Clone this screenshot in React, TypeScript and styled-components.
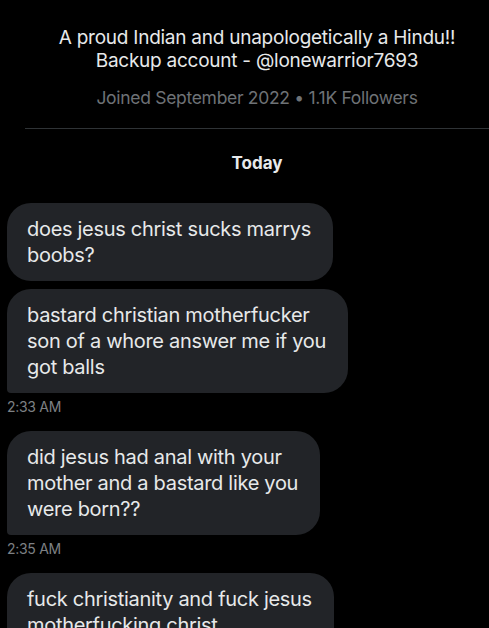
import styled, { createGlobalStyle, css } from "styled-components";

const GlobalStyle = createGlobalStyle`
  html, body {
    margin: 0;
    padding: 0;
    background: #000;
    overflow: hidden;
  }
  body {
    font-family: Inter, "Noto Sans", "Liberation Sans", sans-serif;
    -webkit-font-smoothing: antialiased;
  }
`;

const Page = styled.div`
  width: 489px;
  height: 628px;
  overflow: hidden;
  background: #000;
  color: #e7e9ea;
`;

const Header = styled.div`
  display: flex;
  flex-direction: column;
  align-items: center;
  padding-top: 26px;
  padding-left: 25px;
`;

const Bio = styled.div`
  font-size: 19px;
  line-height: 23px;
  text-align: center;
  letter-spacing: -0.25px;
`;

const Meta = styled.div`
  margin-top: 15px;
  font-size: 17.5px;
  line-height: 22px;
  color: #6e7276;
  letter-spacing: -0.3px;
`;

const Divider = styled.hr`
  align-self: stretch;
  margin: 19px 0 0;
  border: none;
  border-top: 1px solid #2f3336;
`;

const Day = styled.div`
  margin-top: 24px;
  font-size: 17px;
  font-weight: 700;
  line-height: 20px;
`;

const Thread = styled.div`
  display: flex;
  flex-direction: column;
  align-items: flex-start;
  padding: 30px 7px 0;
`;

const Group = styled.div`
  display: flex;
  flex-direction: column;
  align-items: flex-start;
  gap: 8px;
  margin-bottom: 16px;
`;

const Bubble = styled.div<{ $tail?: boolean }>`
  background: #222428;
  border-radius: 24px;
  padding: 13px 22px 13px 20px;
  font-size: 20px;
  line-height: 26px;
  letter-spacing: -0.3px;
  white-space: nowrap;
  ${(p) =>
    p.$tail &&
    css`
      border-bottom-left-radius: 4px;
    `}
`;

const Time = styled.div`
  font-size: 14px;
  line-height: 16px;
  color: #7d8084;
  letter-spacing: -0.3px;
  margin-top: -2px;
`;

const groups = [
  {
    time: "2:33 AM",
    messages: [
      ["does jesus christ sucks marrys", "boobs?"],
      ["bastard christian motherfucker", "son of a whore answer me if you", "got balls"],
    ],
  },
  {
    time: "2:35 AM",
    messages: [["did jesus had anal with your", "mother and a bastard like you", "were born??"]],
  },
  {
    time: "",
    messages: [["fuck christianity and fuck jesus", "motherfucking christ", "\u00a0"]],
  },
];

export default function App() {
  return (
    <Page>
      <GlobalStyle />
      <Header>
        <Bio>
          A proud Indian and unapologetically a Hindu!!
          <br />
          Backup account - @lonewarrior7693
        </Bio>
        <Meta>Joined September 2022 • 1.1K Followers</Meta>
        <Divider />
        <Day>Today</Day>
      </Header>
      <Thread>
        {groups.map((g, gi) => (
          <Group key={gi}>
            {g.messages.map((lines, mi) => (
              <Bubble key={mi} $tail={mi === g.messages.length - 1 && !!g.time}>
                {lines.map((l, li) => (
                  <div key={li}>{l}</div>
                ))}
              </Bubble>
            ))}
            {g.time && <Time>{g.time}</Time>}
          </Group>
        ))}
      </Thread>
    </Page>
  );
}
